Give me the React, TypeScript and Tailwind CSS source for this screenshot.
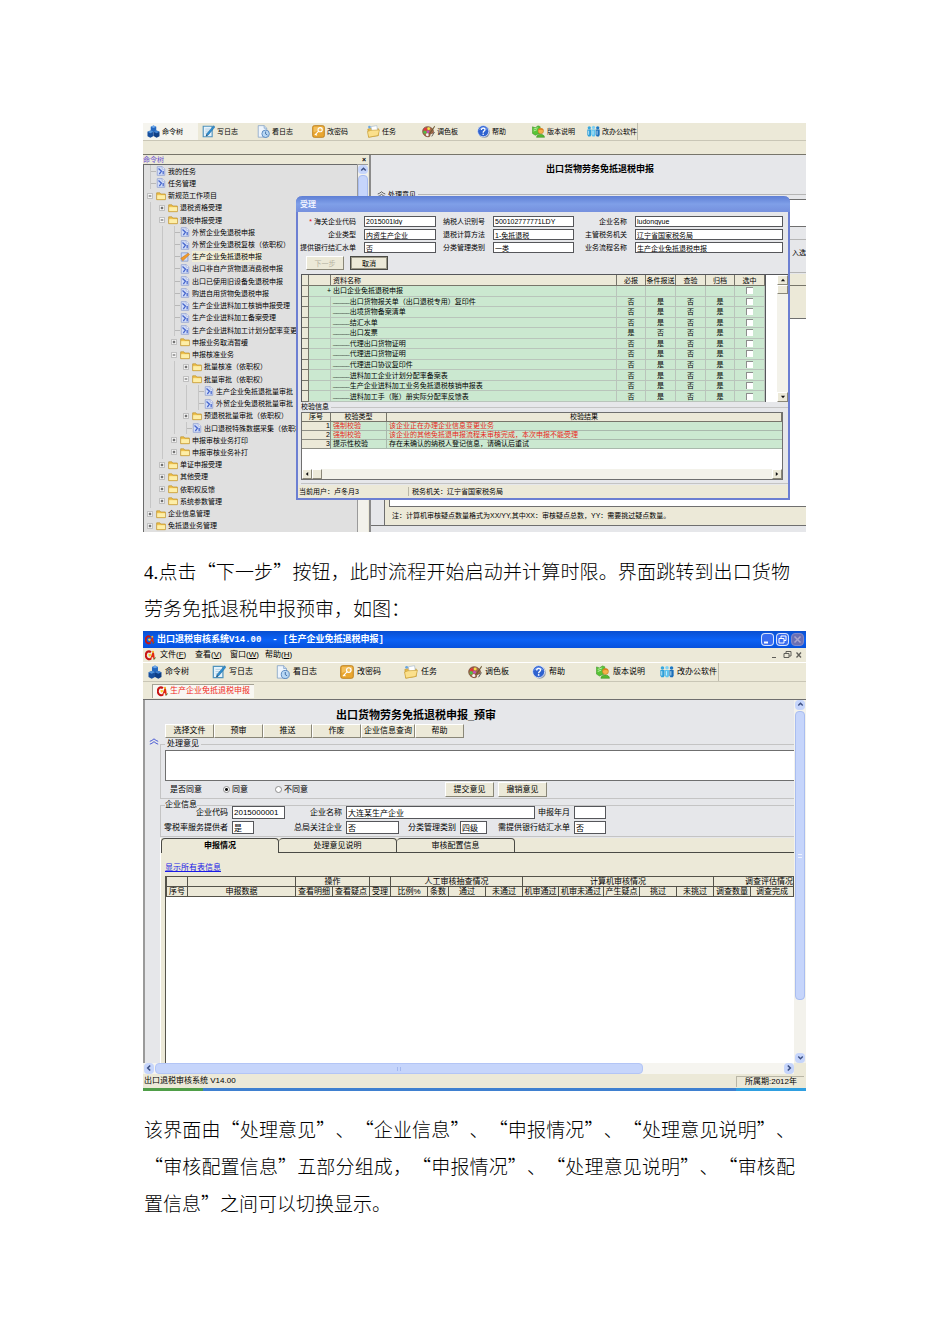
import type { ReactNode } from "react"
import { useState } from "react"
import clsx from "clsx"

type IconProps = { className?: string }

function CubesIcon({ className }: IconProps) {
  return (
    <svg viewBox="0 0 16 16" className={className}>
      <path d="M4.600 2.200L8 .6l3.400 1.600v4.600L8 8.600 4.600 6.800z" fill="#2468c0" />
      <path d="M4.600 2.200L8 3.800l3.400-1.600L8 .6z" fill="#6fa8e8" />
      <path d="M.6 8.400L4.200 6.800 8 8.400v5.200l-3.800 2L.6 13.800z" fill="#174f9e" />
      <path d="M.6 8.400l3.600 1.600L8 8.400 4.200 6.800z" fill="#4f93dc" />
      <path d="M8 8.400l3.800-1.600 3.600 1.600v5.400l-3.600 1.800L8 13.600z" fill="#0f3f86" />
      <path d="M8 8.400l3.800 1.600 3.600-1.600-3.600-1.600z" fill="#3f82d2" />
    </svg>
  )
}

function WriteLogIcon({ className }: IconProps) {
  return (
    <svg viewBox="0 0 16 16" className={className}>
      <path d="M1.500 1.500h11v13h-11z" fill="#e6f3fb" stroke="#4f93bd" strokeWidth="1.400" />
      <path d="M4 5h6M4 7.5h5M4 10h3" stroke="#9dc3dd" strokeWidth=".8" />
      <path d="M14.400.8l1.400 1.800-8 9.600-2.800 1.600.8-3z" fill="#2e8fd0" stroke="#1b5f97" strokeWidth=".6" />
      <path d="M5.2 13.600l.5-1.800 1.200 1z" fill="#333" />
    </svg>
  )
}

function ReadLogIcon({ className }: IconProps) {
  return (
    <svg viewBox="0 0 16 16" className={className}>
      <path d="M1.5.8h7.2L12 4v11H1.5z" fill="#eef5fd" stroke="#7f9fc4" strokeWidth=".9" />
      <path d="M8.7.8V4H12" fill="#c8dcf2" stroke="#7f9fc4" strokeWidth=".8" />
      <circle cx="10.6" cy="10.8" r="4.6" fill="#b9d8f4" stroke="#4a7db8" />
      <path d="M10.6 8v3l2.2 1.4" fill="none" stroke="#2f5f99" />
    </svg>
  )
}

function KeyIcon({ className }: IconProps) {
  return (
    <svg viewBox="0 0 16 16" className={className}>
      <rect x=".8" y=".8" width="14.4" height="14.4" rx="2" fill="#e9a62f" stroke="#b87812" />
      <path d="M2 2h12v5Q8 6 2 9z" fill="#f3bf5c" />
      <circle cx="10" cy="5.800" r="2.600" fill="none" stroke="#fff" strokeWidth="1.300" />
      <path d="M8.2 7.6L3.4 12.6M4.6 11.2l1.6 1.6" stroke="#fff" strokeWidth="1.300" />
    </svg>
  )
}

function TaskIcon({ className }: IconProps) {
  return (
    <svg viewBox="0 0 16 16" className={className}>
      <path d="M1 5l5-1 1.5 1.4L14 4.5V13L2 15z" fill="#eebf4d" stroke="#b98a1f" strokeWidth=".7" />
      <path d="M5 2l7-1.2 1 6-7 1.6z" fill="#fff" stroke="#9fb6cc" strokeWidth=".7" />
      <path d="M.6 8l4-1.4L15.4 6 13.6 13 2 15z" fill="#fbe08c" stroke="#c59a2e" strokeWidth=".7" />
      <circle cx="3" cy="2.6" r="1.6" fill="#6aa6df" />
    </svg>
  )
}

function PaletteIcon({ className }: IconProps) {
  return (
    <svg viewBox="0 0 16 16" className={className}>
      <path d="M7 2C3 2 .6 4.8.8 8.2 1 12 4.6 15 8.6 14.4c2-.4.6-2.4 1.8-3.4s3.8 0 3.8-3S11 2 7 2z" fill="#a9694b" stroke="#5d3220" strokeWidth=".7" />
      <circle cx="4.4" cy="5.4" r="1.8" fill="#e8323a" />
      <circle cx="8.2" cy="4.6" r="1.7" fill="#f5e04c" />
      <circle cx="3.6" cy="9" r="1.8" fill="#4cc04c" />
      <circle cx="6.6" cy="12" r="1.8" fill="#f2f2f2" />
      <circle cx="7.4" cy="8.2" r="1.5" fill="#c44cc0" />
      <path d="M15.4.8L9.4 9.2l-1.6 3 2.8-2L16 2z" fill="#6e5a34" />
      <path d="M12 14l3.4-5.4" stroke="#444" />
    </svg>
  )
}

function HelpIcon({ className }: IconProps) {
  return (
    <svg viewBox="0 0 16 16" className={className}>
      <circle cx="8.8" cy="8.8" r="7" fill="#8f99ae" />
      <circle cx="7.6" cy="7.6" r="6.9" fill="#2f62cf" stroke="#e8effc" strokeWidth=".9" />
      <path d="M2 6.4a6 6 0 0 1 11.2 0Q7.6 3.6 2 6.4z" fill="#6f97ea" />
      <path d="M5.4 6.2c0-3 4.4-3 4.4-.4 0 1.8-2.2 1.6-2.2 3.6" fill="none" stroke="#fff" strokeWidth="1.6" />
      <circle cx="7.6" cy="11.4" r="1" fill="#fff" />
    </svg>
  )
}

function VersionIcon({ className }: IconProps) {
  return (
    <svg viewBox="0 0 16 16" className={className}>
      <path d="M.6 2.2L4 3.4 7.4 1l2.6 1v8L4 12.6.6 10.4z" fill="#58c436" stroke="#2f8d1b" strokeWidth=".6" />
      <path d="M2 5l5-1.6M2 7.4l4-1.6" stroke="#c9f2b4" />
      <circle cx="10.8" cy="7.4" r="3.4" fill="#f4b04a" stroke="#b97216" strokeWidth=".6" />
      <path d="M7.4 6.6c.6-3.4 6.4-3.4 6.8 0-2-1-4.6-1-6.8 0z" fill="#e37d1e" />
      <path d="M5.6 15.2c0-5 9.8-5 9.8 0z" fill="#56b832" stroke="#2f8d1b" strokeWidth=".6" />
    </svg>
  )
}

function OfficeIcon({ className }: IconProps) {
  return (
    <svg viewBox="0 0 16 16" className={className}>
      <circle cx="2.8" cy="3.4" r="2" fill="#37a7de" />
      <circle cx="8" cy="3" r="2" fill="#7fd1f3" />
      <circle cx="13.2" cy="3.4" r="2" fill="#1d78c4" />
      <path d="M.4 5.600h4.800v6.800l-1 1.600H1.600l-1.200-1.600z" fill="#2e9fda" />
      <path d="M5.600 5.600h4.800v6.800l-1 1.600H6.800l-1.200-1.600z" fill="#5ec3ee" />
      <path d="M10.800 5.600h4.800v6.800l-1 1.600H12l-1.200-1.600z" fill="#1b6fba" />
      <path d="M2 7v5M7.4 7v5M12.4 7v5" stroke="#d5f1fc" />
    </svg>
  )
}

function DocIcon({ className }: IconProps) {
  return (
    <svg viewBox="0 0 12 12" className={className}>
      <path d="M1.5.8h6l3 3v7.4h-9z" fill="#d3def8" stroke="#8d9dd0" strokeWidth=".9" />
      <path d="M7.5.8v3h3" fill="#fff" stroke="#8d9dd0" strokeWidth=".7" />
      <path d="M3 3l3.6 3.200L4 9.600M8.600 6v4" fill="none" stroke="#4766cc" strokeWidth="1.5" />
    </svg>
  )
}

function EditDocIcon({ className }: IconProps) {
  return (
    <svg viewBox="0 0 12 12" className={className}>
      <path d="M1.5 1h8v10h-8z" fill="#cfdcf6" stroke="#7d92c8" strokeWidth=".9" />
      <path d="M1 7.6l2.4 3L11.4 3 9.8 1.4z" fill="#f09a2c" stroke="#b5640f" strokeWidth=".5" />
    </svg>
  )
}

function FolderIcon({ className }: IconProps) {
  return (
    <svg viewBox="0 0 12 12" className={className}>
      <path d="M.8 2.2h3.8l1 1.4h5.6v6.8H.8z" fill="#f0c24e" stroke="#b98d22" strokeWidth=".8" />
      <path d="M1.4 5h9.4v4.8H1.4z" fill="#fdeea8" />
    </svg>
  )
}

function AppIcon({ className }: IconProps) {
  return (
    <svg viewBox="0 0 16 16" className={className}>
      <path d="M8.6 3.4C5-.2.6 3.6 1.2 8.6c.6 5 5.4 6 7.6 3.6" fill="none" stroke="#c81414" strokeWidth="3" />
      <path d="M7.4 13.6L11 3l2 .4 1.4 10h-2.2l-.4-3H10l-1 3.2z" fill="#e02a10" />
      <path d="M4.6 6.4l3.4-1 1.4 2.4-3 2z" fill="#f6d32a" />
      <circle cx="11.6" cy="2.6" r="1.6" fill="#f6b92a" />
      <path d="M13 13.8l2.6-3" stroke="#2c8a2c" strokeWidth="1.4" />
    </svg>
  )
}

function CollapseIcon({ className }: IconProps) {
  return (
    <svg viewBox="0 0 12 8" className={className} fill="none" stroke="currentColor" strokeWidth="1">
      <path d="M1 4q2.5-.6 5-3 2.500 2.400 5 3M1 7.400q2.500-.6 5-3 2.500 2.400 5 3" />
    </svg>
  )
}

function Chevron({ className }: IconProps) {
  return (
    <svg viewBox="0 0 10 10" className={className} fill="none" stroke="#3d5185" strokeWidth="1.600">
      <path d="M2.500 6.200L5 3.700l2.500 2.500" />
    </svg>
  )
}

function Triangle({ className }: IconProps) {
  return (
    <svg viewBox="0 0 10 10" className={className}>
      <path d="M1.500 7L5 3l3.500 4z" fill="#111" />
    </svg>
  )
}

const tools = [
  { label: "命令树", Icon: CubesIcon },
  { label: "写日志", Icon: WriteLogIcon },
  { label: "看日志", Icon: ReadLogIcon },
  { label: "改密码", Icon: KeyIcon },
  { label: "任务", Icon: TaskIcon },
  { label: "调色板", Icon: PaletteIcon },
  { label: "帮助", Icon: HelpIcon },
  { label: "版本说明", Icon: VersionIcon },
  { label: "改办公软件", Icon: OfficeIcon },
]

type Node = { level: number; kind: "leaf" | "open" | "closed"; text: string; selected?: boolean }

const tree: Node[] = [
  { level: 0, kind: "leaf", text: "我的任务" },
  { level: 0, kind: "leaf", text: "任务管理" },
  { level: 0, kind: "open", text: "新规范工作项目" },
  { level: 1, kind: "closed", text: "退税资格受理" },
  { level: 1, kind: "open", text: "退税申报受理" },
  { level: 2, kind: "leaf", text: "外贸企业免退税申报" },
  { level: 2, kind: "leaf", text: "外贸企业免退税复核（依职权）" },
  { level: 2, kind: "leaf", text: "生产企业免抵退税申报", selected: true },
  { level: 2, kind: "leaf", text: "出口非自产货物退消费税申报" },
  { level: 2, kind: "leaf", text: "出口已使用旧设备免退税申报" },
  { level: 2, kind: "leaf", text: "购进自用货物免退税申报" },
  { level: 2, kind: "leaf", text: "生产企业进料加工核销申报受理" },
  { level: 2, kind: "leaf", text: "生产企业进料加工备案受理" },
  { level: 2, kind: "leaf", text: "生产企业进料加工计划分配率变更受理" },
  { level: 2, kind: "closed", text: "申报业务取消暂缓" },
  { level: 2, kind: "open", text: "申报核准业务" },
  { level: 3, kind: "closed", text: "批量核准（依职权）" },
  { level: 3, kind: "open", text: "批量审批（依职权）" },
  { level: 4, kind: "leaf", text: "生产企业免抵退批量审批（依职权）" },
  { level: 4, kind: "leaf", text: "外贸企业免退税批量审批（依职权）" },
  { level: 3, kind: "closed", text: "预退税批量审批（依职权）" },
  { level: 3, kind: "leaf", text: "出口退税特殊数据采集（依职权）" },
  { level: 2, kind: "closed", text: "申报审核业务打印" },
  { level: 2, kind: "closed", text: "申报审核业务补打" },
  { level: 1, kind: "closed", text: "单证申报受理" },
  { level: 1, kind: "closed", text: "其他受理" },
  { level: 1, kind: "closed", text: "依职权反馈" },
  { level: 1, kind: "closed", text: "系统参数管理" },
  { level: 0, kind: "closed", text: "企业信息管理" },
  { level: 0, kind: "closed", text: "免抵退业务管理" },
]

const materials = [
  { name: "出口货物报关单（出口退税专用）复印件", flags: ["否", "是", "否", "是"] },
  { name: "出境货物备案清单", flags: ["否", "是", "否", "是"] },
  { name: "结汇水单", flags: ["否", "是", "否", "是"] },
  { name: "出口发票", flags: ["是", "否", "否", "是"] },
  { name: "代理出口货物证明", flags: ["否", "是", "否", "是"] },
  { name: "代理进口货物证明", flags: ["否", "是", "否", "是"] },
  { name: "代理进口协议复印件", flags: ["否", "是", "否", "是"] },
  { name: "进料加工企业计划分配率备案表", flags: ["否", "是", "否", "是"] },
  { name: "生产企业进料加工业务免抵退税核销申报表", flags: ["否", "是", "否", "是"] },
  { name: "进料加工手（账）册实际分配率反馈表", flags: ["否", "是", "否", "是"] },
]

const checks = [
  { type: "强制校验", result: "该企业正在办理企业信息变更业务", error: true },
  { type: "强制校验", result: "该企业的其他免抵退申报流程未审核完成，本次申报不能受理", error: true },
  { type: "提示性校验", result: "存在未确认的纳税人登记信息，请确认后重试", error: false },
]

const raised = "border border-t-white border-l-white border-r-[#8a8778] border-b-[#8a8778] bg-[#ece9d8]"

function Field({ label, value, labelClass, inputClass, required }: {
  label: string
  value: string
  labelClass: string
  inputClass: string
  required?: boolean
}) {
  return (
    <label className={clsx("flex items-center", labelClass)}>
      <span className="flex-1 whitespace-nowrap text-right">
        {required && <span className="text-red-600">* </span>}
        {label}
      </span>
      <input defaultValue={value} className={clsx("shrink-0 border border-[#55565a] bg-white px-px", inputClass)} />
    </label>
  )
}

function Tree() {
  return (
    <ul className="grid h-[368px] min-w-0 flex-1 auto-rows-fr overflow-hidden border-l border-t border-[#6b6b6b] bg-[#e0e0e0]">
      {tree.map((node, i) => (
        <li key={i} className="flex min-h-0 items-center whitespace-nowrap">
          {Array.from({ length: node.level }, (_, n) => (
            <span key={n} className="flex h-full w-3 shrink-0 justify-center">
              <span className="w-px bg-[#c6c6c6]" />
            </span>
          ))}
          <span className="flex h-full w-3 shrink-0 items-center justify-center">
            {node.kind === "leaf" ? (
              <>
                <span className="ml-[6px] h-full w-px bg-[#c6c6c6]" />
                <span className="h-px flex-1 bg-[#b8b8b8]" />
              </>
            ) : (
              <svg viewBox="0 0 7 7" className="size-[6px]">
                <path d="M.5.5h6v6h-6z" fill="#f4f4f4" stroke="#b4b4b4" />
                <path d={node.kind === "closed" ? "M2 3.5h3M3.5 2v3" : "M2 3.5h3"} stroke="#333" />
              </svg>
            )}
          </span>
          {node.kind !== "leaf" ? (
            <FolderIcon className="size-[10px] shrink-0" />
          ) : node.selected ? (
            <EditDocIcon className="size-[10px] shrink-0" />
          ) : (
            <DocIcon className="size-[10px] shrink-0" />
          )}
          <span className={clsx("ml-0.5 leading-[11px]", node.selected && "bg-[#f1edd6]")}>{node.text}</span>
        </li>
      ))}
    </ul>
  )
}

function MaterialTable() {
  const cell = "border-b border-r border-[#b9c4bb] p-0 text-center"
  const head = "border-b border-r border-[#77756a] bg-[#ece9d8] p-0 text-center font-normal"
  return (
    <table className="h-32 w-full table-fixed border-separate border-spacing-0 border-l border-t border-[#55565a] bg-[#cbe8d0] leading-[9px]">
      <colgroup>
        <col className="w-[7px]" />
        <col className="w-[22px]" />
        <col />
        <col className="w-[29px]" />
        <col className="w-[30px]" />
        <col className="w-[30px]" />
        <col className="w-[29px]" />
        <col className="w-[30px]" />
      </colgroup>
      <thead>
        <tr>
          <th className={clsx(head, "h-[11px]")} />
          <th className={head} />
          <th className={clsx(head, "text-left")}><span className="flex pl-0.5">资料名称</span></th>
          <th className={head}>必报</th>
          <th className={clsx(head, "whitespace-nowrap")}>条件报送</th>
          <th className={head}>查验</th>
          <th className={head}>归档</th>
          <th className={head}>选中</th>
        </tr>
      </thead>
      <tbody>
        <tr>
          <td className={head} />
          <td className="border-b border-[#b9c4bb] p-0 text-right">+</td>
          <td className={cell}><span className="flex pl-0.5">出口企业免抵退税申报</span></td>
          <td className={cell} />
          <td className={cell} />
          <td className={cell} />
          <td className={cell} />
          <td className={cell}>
            <input type="checkbox" aria-label="出口企业免抵退税申报" className="mx-auto block size-[7px] appearance-none border-l border-t border-[#8d8d8d] bg-white checked:bg-gray-700" />
          </td>
        </tr>
        {materials.map((m) => (
          <tr key={m.name}>
            <td className={head} />
            <td className={cell} />
            <td className={cell}>
              <span className="flex whitespace-nowrap pl-0.5">
                <span className="text-[6px]">_____</span>
                {m.name}
              </span>
            </td>
            {m.flags.map((flag, i) => (
              <td key={i} className={cell}>{flag}</td>
            ))}
            <td className={cell}>
              <input type="checkbox" aria-label={m.name} className="mx-auto block size-[7px] appearance-none border-l border-t border-[#8d8d8d] bg-white checked:bg-gray-700" />
            </td>
          </tr>
        ))}
      </tbody>
    </table>
  )
}

function AcceptDialog() {
  return (
    <div role="dialog" aria-label="受理" className="absolute left-[153px] top-[73px] w-[494px] rounded-t-md border-2 border-t-0 border-[#6c7fd2] bg-[#e6e7ea]">
      <div className="-mx-0.5 flex h-4 items-center rounded-t-md bg-linear-to-b from-[#5f7fd4] via-[#7f9fe8] to-[#7590de] px-1 text-[8px] font-bold text-[#eef2ff]">
        受理
      </div>

      <div className="flex flex-col gap-0.5 pr-[5px] pt-1">
        <div className="flex">
          <Field label="海关企业代码" value="2015001ldy" required labelClass="w-[138px] gap-2" inputClass="h-[11px] w-[72px]" />
          <Field label="纳税人识别号" value="500102777771LDY" labelClass="w-[138px] gap-2" inputClass="h-[11px] w-[81px]" />
          <Field label="企业名称" value="ludongyue" labelClass="flex-1 gap-2" inputClass="h-[11px] w-[148px]" />
        </div>
        <div className="flex">
          <Field label="企业类型" value="内资生产企业" labelClass="w-[138px] gap-2" inputClass="h-[11px] w-[72px]" />
          <Field label="退税计算方法" value="1-免抵退税" labelClass="w-[138px] gap-2" inputClass="h-[11px] w-[81px]" />
          <Field label="主管税务机关" value="辽宁省国家税务局" labelClass="flex-1 gap-2" inputClass="h-[11px] w-[148px]" />
        </div>
        <div className="flex">
          <Field label="提供银行结汇水单" value="否" labelClass="w-[138px] gap-2" inputClass="h-[11px] w-[72px]" />
          <Field label="分类管理类别" value="一类" labelClass="w-[138px] gap-2" inputClass="h-[11px] w-[81px]" />
          <Field label="业务流程名称" value="生产企业免抵退税申报" labelClass="flex-1 gap-2" inputClass="h-[11px] w-[148px]" />
        </div>
      </div>

      <div className="flex gap-1.5 px-2 pb-1 pt-[3px]">
        <button type="button" disabled className={clsx("h-[14px] w-[38px] text-[#b5b2a2]", raised)}>下一步</button>
        <button type="button" className="h-[14px] w-[38px] border border-[#4a4a45] bg-[#ece9d8] outline outline-1 -outline-offset-2 outline-[#9c9988]">取消</button>
      </div>

      <div className="ml-[3px] flex">
        <div className="min-w-0 flex-1"><MaterialTable /></div>
        <div className="w-3 border-l border-t border-[#55565a] bg-white" />
        <div className="flex w-[11px] flex-col border-t border-[#55565a] bg-[#f3f2ea]">
          <button type="button" aria-label="向上" className={clsx("h-[10px]", raised)}><Triangle className="mx-auto size-[6px]" /></button>
          <div className={clsx("h-[9px]", raised)} />
          <button type="button" aria-label="向下" className={clsx("mt-auto h-[10px]", raised)}><Triangle className="mx-auto size-[6px] rotate-180" /></button>
        </div>
      </div>

      <fieldset className="ml-[3px] border-b border-t border-[#c4c4c4] pb-[3px] pr-[5px]">
        <legend className="h-[10px] pr-0.5 leading-[10px]">校验信息</legend>
        <div className="border border-[#6f6f6f] bg-white">
          <table className="w-full table-fixed border-separate border-spacing-0 leading-[8px]">
            <colgroup>
              <col className="w-[29px]" />
              <col className="w-14" />
              <col />
            </colgroup>
            <thead>
              <tr>
                {["序号", "校验类型", "校验结果"].map((h) => (
                  <th key={h} className="border-b border-r border-[#77756a] bg-[#ece9d8] p-0 font-normal">{h}</th>
                ))}
              </tr>
            </thead>
            <tbody>
              {checks.map((c, i) => (
                <tr key={i} className={clsx("bg-[#cbe8d0]", c.error && "text-[#e8281c]")}>
                  <td className="border-b border-r border-[#8d8d85] bg-[#ece9d8] p-0 text-right text-black">{i + 1}</td>
                  <td className="border-b border-r border-[#a9b8ac] p-0 pl-0.5">{c.type}</td>
                  <td className="border-b border-[#a9b8ac] p-0 pl-0.5">{c.result}</td>
                </tr>
              ))}
            </tbody>
          </table>
          <div className="mt-5 flex h-[10px] bg-[#f3f2ea]">
            <button type="button" aria-label="向左" className={clsx("w-[10px]", raised)}><Triangle className="mx-auto size-[6px] -rotate-90" /></button>
            <div className={clsx("w-[10px]", raised)} />
            <button type="button" aria-label="向右" className={clsx("ml-auto w-[10px]", raised)}><Triangle className="mx-auto size-[6px] rotate-90" /></button>
          </div>
        </div>
      </fieldset>

      <div className="mt-px flex h-[13px] items-center bg-[#ece9d8]">
        <span className="w-[111px] border-r border-[#b9b6a6] pl-px">当前用户：卢冬月3</span>
        <span className="pl-[3px]">税务机关：辽宁省国家税务局</span>
      </div>
    </div>
  )
}

function AcceptScreen() {
  return (
    <section className="relative overflow-hidden bg-[#ece9d8] text-[7px] leading-[9px]">
      <div className="flex h-[18px] border-b border-[#c9c6b6]">
        {tools.map(({ label, Icon }, i) => (
          <button
            key={label}
            type="button"
            className={clsx("flex w-[55px] shrink-0 items-center gap-0.5 whitespace-nowrap pl-1", i === 0 && "bg-[#f6f5ef]", i === 8 && "border-r border-[#c0bdad]")}
          >
            <Icon className="size-[13px] shrink-0" />
            {label}
          </button>
        ))}
      </div>
      <div className="h-[14px] border-b border-[#77756a]" />

      <div className="flex">
        <div className="w-[225px] shrink-0">
          <div className="flex h-[9px] items-center justify-between pr-0.5">
            <span className="text-[#6a4fd0]">命令树</span>
            <span className="font-bold">×</span>
          </div>
          <div className="flex">
            <Tree />
            <div className="w-[11px] border-l border-t border-[#9a9a9a] bg-[#f3f2ec]">
              <div className="h-[9px] rounded-sm bg-[#c6d5fb]"><Chevron className="mx-auto size-[9px]" /></div>
              <div className="mt-px h-20 rounded-sm border border-[#a9bdf0] bg-[#c6d5fb]" />
            </div>
          </div>
        </div>

        <div className="ml-px flex min-w-0 flex-1 flex-col border-l-2 border-[#8b8b8b] bg-[#e6e7ea]">
          <h2 className="pl-[175px] pt-2 text-[9px] font-bold leading-[12px]">出口货物劳务免抵退税申报</h2>
          <div className="mt-[14px] flex h-[10px] items-center">
            <CollapseIcon className="ml-[6px] w-[9px] text-[#333]" />
            <span className="ml-0.5">处理意见</span>
            <span className="ml-0.5 h-px flex-1 bg-[#b5b5b5]" />
          </div>
          <div className="h-7 border-y border-[#6f6f6f] bg-white" />
          <div className="mt-3 flex h-[34px] items-start justify-end border-y border-[#b5b5b5] pt-2">入选</div>
          <div className="mt-px h-3 border-b border-[#77756a] bg-[#ece9d8]" />
          <div className="h-[33px] border-b border-[#6f6f6f] bg-[#ece9d8]" />
          <div className="ml-[13px] flex flex-1 flex-col border-l border-[#6f6f6f] bg-[#ece9d8] pl-1">
            <div className="flex-1 border-b border-l border-[#6f6f6f] bg-white" />
            <p className="h-[18px] pl-[3px] leading-[18px]">注：计算机审核疑点数量格式为XX/YY,其中XX：审核疑点总数，YY：需要挑过疑点数量。</p>
          </div>
          <div className="h-[7px] border-t border-[#6f6f6f]" />
        </div>
      </div>

      <AcceptDialog />
    </section>
  )
}

function TabButton({ active, onClick, children }: { active: boolean; onClick: () => void; children: ReactNode }) {
  return (
    <button
      type="button"
      role="tab"
      aria-selected={active}
      onClick={onClick}
      className={clsx(
        "h-[15px] w-[118px] rounded-t-[4px] border-r border-t border-[#4a4a45]",
        active ? "border-l font-bold" : "border-b",
      )}
    >
      {children}
    </button>
  )
}

const subHeads = ["查看明细", "查看疑点", "受理", "比例%", "条数", "通过", "未通过", "机审通过", "机审未通过", "产生疑点", "挑过", "未挑过", "调查数量", "调查完成"]

function DeclareTable() {
  const th = "h-[10px] overflow-hidden whitespace-nowrap border border-[#55534a] bg-[#ece9d8] p-0 font-normal"
  return (
    <table className="w-full table-fixed border-collapse leading-[9px]">
      <colgroup>
        <col className="w-[21px]" />
        <col className="w-[108px]" />
        <col className="w-[37px]" />
        <col className="w-[37px]" />
        <col className="w-[21px]" />
        <col className="w-[37px]" />
        <col className="w-[21px]" />
        <col className="w-[37px]" />
        <col className="w-[37px]" />
        <col className="w-[36px]" />
        <col className="w-[45px]" />
        <col className="w-[36px]" />
        <col className="w-[37px]" />
        <col className="w-[37px]" />
        <col className="w-[37px]" />
        <col />
      </colgroup>
      <thead>
        <tr>
          <th className={th} />
          <th className={th} />
          <th className={th} colSpan={2}>操作</th>
          <th className={th} />
          <th className={th} colSpan={4}>人工审核抽查情况</th>
          <th className={th} colSpan={5}>计算机审核情况</th>
          <th className={clsx(th, "text-right")} colSpan={2}>调查评估情况</th>
        </tr>
        <tr>
          <th className={th}>序号</th>
          <th className={th}>申报数据</th>
          {subHeads.map((h) => (
            <th key={h} className={th}>{h}</th>
          ))}
        </tr>
      </thead>
    </table>
  )
}

function ReviewScreen() {
  const [tab, setTab] = useState(0)
  const [agree, setAgree] = useState("同意")

  return (
    <section className="overflow-hidden bg-[#ece9d8] text-[8px] leading-[10px]">
      <div className="flex h-[17px] items-center bg-linear-to-b from-[#0a4fd0] via-[#0b62f6] to-[#0650dc] pl-0.5 pr-0.5 text-white">
        <AppIcon className="size-[10px]" />
        <h2 className="ml-0.5 whitespace-pre font-['Liberation_Mono','Noto_Sans_CJK_SC',monospace] text-[9px] font-bold">出口退税审核系统V14.00  - [生产企业免抵退税申报]</h2>
        <div className="ml-auto flex gap-0.5">
          <button type="button" aria-label="最小化" className="size-[13px] rounded-sm border border-white/80 bg-[#3a6cf0]">
            <svg viewBox="0 0 11 11" className="size-full"><path d="M2 8.500h4" stroke="#fff" strokeWidth="2" /></svg>
          </button>
          <button type="button" aria-label="还原" className="size-[13px] rounded-sm border border-white/80 bg-[#3a6cf0]">
            <svg viewBox="0 0 11 11" className="size-full" fill="none" stroke="#fff"><path d="M4 4V2h5v4.500H7M2 4.500h5V9H2z" /></svg>
          </button>
          <button type="button" aria-label="关闭" className="size-[13px] rounded-sm border border-[#8088c8] bg-[#6a6fb4]">
            <svg viewBox="0 0 11 11" className="size-full"><path d="M2.500 2.500l6 6M8.500 2.500l-6 6" stroke="#a9a4cc" strokeWidth="1.500" /></svg>
          </button>
        </div>
      </div>

      <div className="flex h-[14px] items-center pl-0.5 pr-1">
        <AppIcon className="size-[11px]" />
        <nav className="ml-1 flex">
          {[["文件", "F"], ["查看", "V"], ["窗口", "W"], ["帮助", "H"]].map(([name, key]) => (
            <button key={name} type="button" className="w-[35px] whitespace-nowrap text-left">
              {name}(<u>{key}</u>)
            </button>
          ))}
        </nav>
        <svg viewBox="0 0 32 10" className="ml-auto h-[10px] w-8" fill="none" stroke="#5f5e58">
          <path d="M2 7.500h4M14 3.500h5v4h-5zM16 3V1.500h5V6H19" />
          <path d="M26.500 2.500l4.500 5M31 2.500l-4.500 5" strokeWidth="1.300" />
        </svg>
      </div>

      <div className="flex h-5 border-b border-t border-t-white border-b-[#c9c6b6]">
        {tools.map(({ label, Icon }, i) => (
          <button
            key={label}
            type="button"
            className={clsx("flex w-16 shrink-0 items-center gap-[3px] whitespace-nowrap pl-[5px]", i === 8 && "border-r border-[#c0bdad]")}
          >
            <Icon className="size-[14px] shrink-0" />
            {label}
          </button>
        ))}
      </div>

      <div className="flex h-[18px] items-center border-b border-[#6f6f6f] px-[9px]">
        <button type="button" className="flex h-[14px] items-center gap-0.5 border-l border-t border-[#a5a294] bg-[#f8f7f2] px-1 text-[#f0281c]">
          <AppIcon className="size-[11px]" />
          生产企业免抵退税申报
        </button>
      </div>

      <div className="flex border-l-2 border-[#9a9a9a] bg-[#e6e7ea]">
        <div className="w-[15px] shrink-0 pt-[38px]">
          <CollapseIcon className="ml-1 w-[10px] text-[#2a3fd0]" />
        </div>

        <div className="min-w-0 flex-1">
          <h2 className="pl-44 pt-2 text-[11px] font-bold leading-[14px]">出口货物劳务免抵退税申报_预审</h2>
          <div className="mt-0.5 flex pl-[5px]">
            {["选择文件", "预审", "推送", "作废", "企业信息查询", "帮助"].map((name) => (
              <button key={name} type="button" className={clsx("h-[14px] whitespace-nowrap", raised, name.length > 4 ? "w-[54px]" : "w-[49px]")}>
                {name}
              </button>
            ))}
          </div>

          <fieldset className="min-w-0 border border-r-0 border-[#c4c4c4] pl-1">
            <legend className="h-3 px-0.5 leading-[12px]">处理意见</legend>
            <textarea aria-label="处理意见" className="block h-[31px] w-full resize-none border border-r-0 border-[#6f6f6f] bg-white" />
            <div className="flex h-[17px] items-center">
              <span className="w-[58px] pl-[5px]">是否同意</span>
              {["同意", "不同意"].map((option) => (
                <label key={option} className="flex w-[52px] items-center gap-0.5">
                  <input
                    type="radio"
                    name="agree"
                    checked={agree === option}
                    onChange={() => setAgree(option)}
                    className="size-[7px] appearance-none rounded-full border border-[#8d8d8d] bg-white checked:bg-[radial-gradient(circle,#111_1px,#fff_2px)]"
                  />
                  {option}
                </label>
              ))}
              <button type="button" className={clsx("ml-[118px] h-[15px] w-[49px]", raised)}>提交意见</button>
              <button type="button" className={clsx("ml-1 h-[15px] w-[49px]", raised)}>撤销意见</button>
            </div>
          </fieldset>

          <fieldset className="mt-px min-w-0 border border-r-0 border-[#c4c4c4] pb-0.5">
            <legend className="ml-1 h-[10px] leading-[10px]">企业信息</legend>
            <div className="-mt-1 flex">
              <Field label="企业代码" value="2015000001" labelClass="w-[124px] gap-1" inputClass="h-[13px] w-[53px]" />
              <Field label="企业名称" value="大连某生产企业" labelClass="w-[250px] gap-1" inputClass="h-[13px] w-[189px]" />
              <Field label="申报年月" value="" labelClass="w-[71px] gap-1" inputClass="h-[13px] w-8" />
            </div>
            <div className="mt-0.5 flex">
              <Field label="零税率服务提供者" value="是" labelClass="w-[93px] gap-1" inputClass="h-[13px] w-[22px]" />
              <Field label="总局关注企业" value="否" labelClass="w-[145px] gap-1" inputClass="h-[13px] w-[53px]" />
              <Field label="分类管理类别" value="四级" labelClass="w-[88px] gap-1" inputClass="h-[13px] w-[27px]" />
              <Field label="需提供银行结汇水单" value="否" labelClass="w-[119px] gap-1" inputClass="h-[13px] w-8" />
            </div>
          </fieldset>

          <div className="mt-px border-l border-white bg-[#ece9d8]">
            <div role="tablist" className="flex">
              {["申报情况", "处理意见说明", "审核配置信息"].map((name, i) => (
                <TabButton key={name} active={tab === i} onClick={() => setTab(i)}>{name}</TabButton>
              ))}
              <div className="flex-1 border-b border-[#4a4a45]" />
            </div>
            <div className="pb-[3px] pl-1 pt-[10px]">
              <a href="#all" className="text-[#1a1ae6] underline">显示所有表信息</a>
            </div>
            <div className="ml-1 h-[187px] border-l border-[#55534a] bg-white">
              <DeclareTable />
            </div>
          </div>
        </div>

        <div className="flex w-3 shrink-0 flex-col bg-[#f3f2ec] px-px">
          <div className="h-[10px] rounded-sm bg-[#c6d5fb]"><Chevron className="mx-auto size-[9px]" /></div>
          <div className="mt-px flex h-[289px] items-center justify-center rounded-sm border border-[#a9bdf0] bg-[#c6d5fb]">
            <span className="h-1 w-1 border-y border-[#eef2ff]" />
          </div>
          <div className="mt-auto h-[10px] rounded-sm bg-[#c6d5fb]"><Chevron className="mx-auto size-[9px] rotate-180" /></div>
        </div>
      </div>

      <div className="flex h-[11px] bg-[#f6f5f0] pl-px">
        <div className="w-[10px] rounded-sm bg-[#c6d5fb]"><Chevron className="size-[10px] -rotate-90" /></div>
        <div className="ml-px flex w-[488px] items-center justify-center rounded-sm border border-[#b3c5f6] bg-[#c6d5fb]">
          <span className="h-1 w-1 border-x border-[#a3b8ef]" />
        </div>
        <div className="ml-auto w-[10px] rounded-sm bg-[#c6d5fb]"><Chevron className="size-[10px] rotate-90" /></div>
        <div className="w-3 bg-[#ece9d8]" />
      </div>

      <div className="flex h-[14px] items-center justify-between pl-px pr-0.5">
        <span>出口退税审核系统 V14.00</span>
        <span className="w-[68px] border-l border-t border-[#b9b6a6] pl-2">所属期:2012年</span>
      </div>
      <div className="flex h-[3px] bg-[#3f80d0]">
        <div className="w-[60px] bg-[#4f9e48]" />
        <div className="ml-auto w-[70px] bg-[#2f9fe0]" />
      </div>
    </section>
  )
}

export default function App() {
  return (
    <main lang="zh-CN" className="bg-white pb-28 pl-[143px] pr-36 pt-[123px] font-['Liberation_Sans','Noto_Sans_CJK_SC',sans-serif] text-black">
      <AcceptScreen />
      <p className="mt-5 pl-px pr-4 text-justify font-['Noto_Sans_CJK_SC',serif] text-[19px] font-light leading-[37px] [text-spacing-trim:space-all]">
        <span className="font-['Liberation_Serif',serif] leading-none">4.</span>
        点击“下一步”按钮，此时流程开始启动并计算时限。界面跳转到出口货物劳务免抵退税申报预审，如图：
      </p>
      <div className="mt-[5px]">
        <ReviewScreen />
      </div>
      <p className="mt-[19px] pl-px pr-[11px] text-justify font-['Noto_Sans_CJK_SC',serif] text-[19px] font-light leading-[37px] [text-spacing-trim:space-all]">
        该界面由“处理意见”、“企业信息”、“申报情况”、“处理意见说明”、“审核配置信息”五部分组成，“申报情况”、“处理意见说明”、“审核配置信息”之间可以切换显示。
      </p>
    </main>
  )
}
